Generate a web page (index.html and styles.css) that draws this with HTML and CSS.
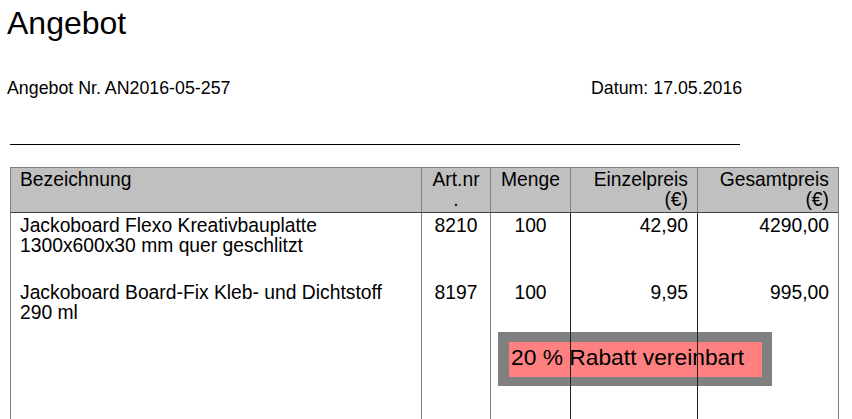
FILE: index.html
```html
<!DOCTYPE html>
<html lang="de">
<head>
<meta charset="utf-8">
<title>Angebot</title>
<link rel="stylesheet" href="styles.css">
</head>
<body>
<div class="page">
  <h1 class="title">Angebot</h1>
  <div class="meta">
    <span>Angebot Nr. AN2016-05-257</span>
    <span>Datum: 17.05.2016</span>
  </div>
  <hr class="rule">
  <div class="table-wrap">
    <div class="note">20 % Rabatt vereinbart</div>
    <table class="items">
      <thead>
        <tr>
          <th class="c-name">Bezeichnung</th>
          <th class="c-art">Art.nr<br>.</th>
          <th class="c-qty">Menge</th>
          <th class="c-price">Einzelpreis (€)</th>
          <th class="c-total">Gesamtpreis (€)</th>
        </tr>
      </thead>
      <tbody>
        <tr>
          <td class="c-name">Jackoboard Flexo Kreativbauplatte 1300x600x30 mm quer geschlitzt</td>
          <td class="c-art">8210</td>
          <td class="c-qty">100</td>
          <td class="c-price">42,90</td>
          <td class="c-total">4290,00</td>
        </tr>
        <tr class="last">
          <td class="c-name">Jackoboard Board-Fix Kleb- und Dichtstoff 290 ml</td>
          <td class="c-art">8197</td>
          <td class="c-qty">100</td>
          <td class="c-price">9,95</td>
          <td class="c-total">995,00</td>
        </tr>
      </tbody>
    </table>
  </div>
</div>
</body>
</html>
```
FILE: styles.css
```css
html, body {
  margin: 0;
  background: #fff;
}
body {
  font-family: "Liberation Sans", Arial, sans-serif;
  color: #000;
}
.page {
  padding: 5px 0 0 7px;
}
.title {
  margin: 0;
  font-size: 32px;
  line-height: 37px;
  font-weight: normal;
}
.meta {
  display: grid;
  grid-template-columns: 584px auto;
  margin-top: 36px;
  font-size: 17.8px;
  line-height: 20px;
}
.rule {
  margin: 46px 0 0 3px;
  width: 730px;
  height: 0;
  border: 0;
  border-top: 1px solid #000;
}
.table-wrap {
  position: relative;
  margin: 22px 0 0 3px;
}
.note {
  position: absolute;
  left: 488px;
  top: 165px;
  box-sizing: border-box;
  width: 274px;
  height: 54px;
  padding: 2px 0 0 2px;
  border-style: solid;
  border-color: #808080;
  border-width: 10px 10px 9px 11px;
  background: #ff8080;
  font-size: 22.8px;
  line-height: 26px;
  white-space: nowrap;
}
.items {
  position: relative;
  z-index: 1;
  border-collapse: separate;
  border-spacing: 0;
  table-layout: fixed;
  width: 829px;
  font-size: 19.3px;
  line-height: 20px;
}
.items th,
.items td {
  box-sizing: border-box;
  vertical-align: top;
  border-left: 1px solid #808080;
}
.items th:last-child,
.items td:last-child {
  border-right: 1px solid #808080;
}
.items th {
  font-weight: normal;
  background: #c0c0c0;
  border-top: 1px solid #808080;
  border-bottom: 1px solid #404040;
  padding: 2px 9px 2px 9px;
}
.items td {
  padding: 3px 9px 24px 9px;
}
.items .last td {
  padding-bottom: 160px;
}
.items td.c-price,
.items td.c-total {
  border-left-color: #222;
}
.c-name { width: 411px; text-align: left; }
.c-art { width: 69px; text-align: center; }
.c-qty { width: 80px; text-align: center; }
.c-price { width: 127px; text-align: right; }
.c-total { width: 142px; text-align: right; }
```
